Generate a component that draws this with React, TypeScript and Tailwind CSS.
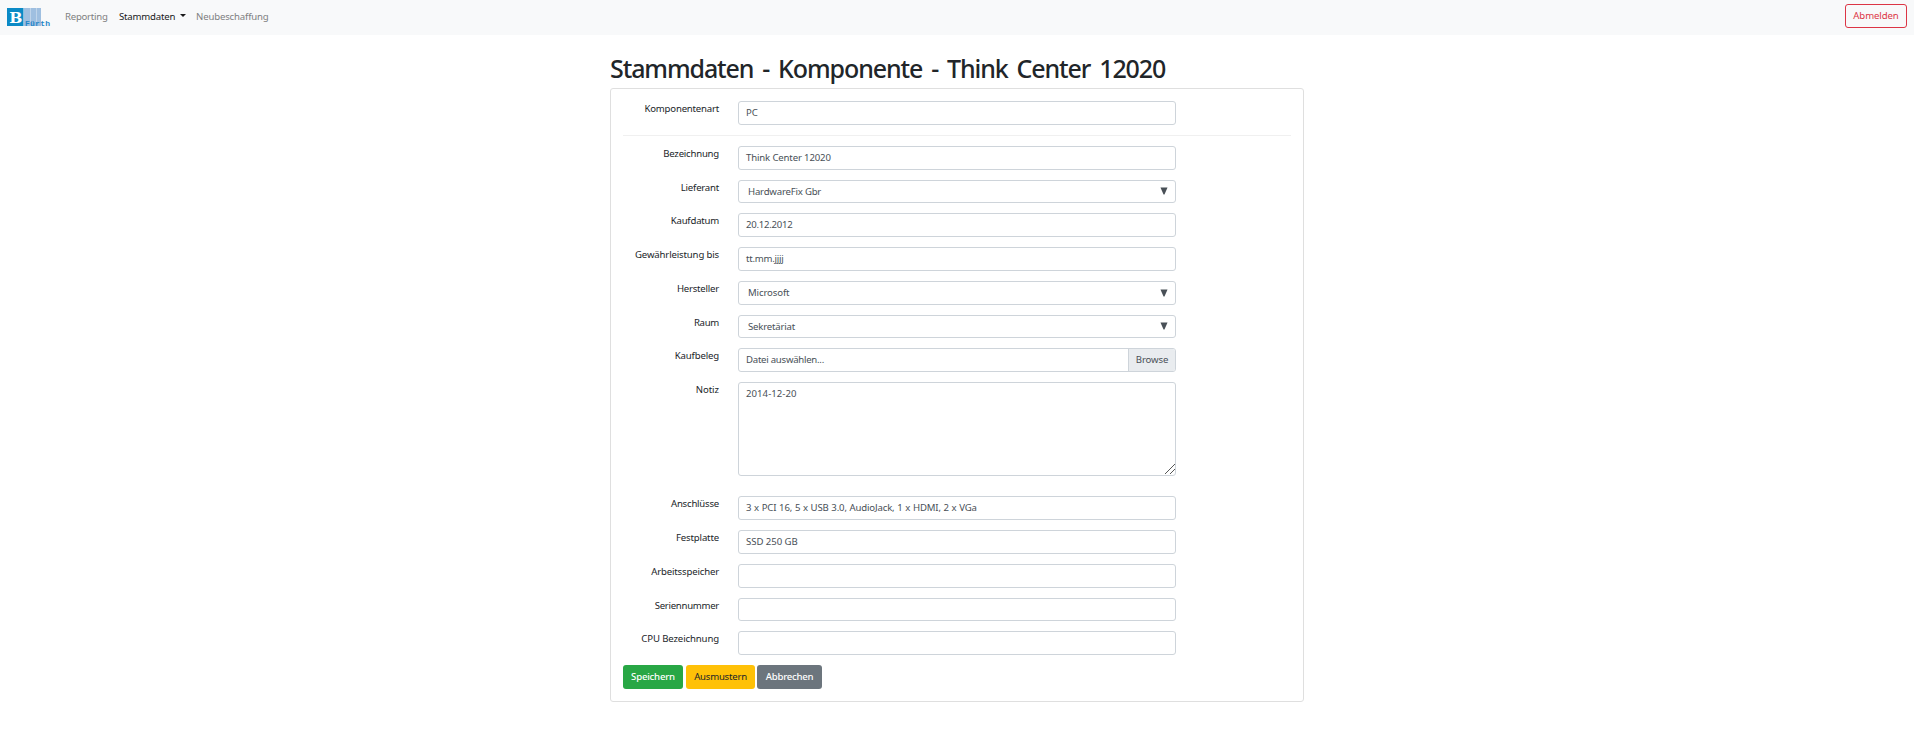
import React from "react";

const LABEL = "mt-px flex h-[14px] w-[96px] shrink-0 items-center justify-end whitespace-nowrap leading-[14px] text-[#212529]";
const FIELD = "flex w-[438px] items-center rounded-[3px] border border-[#ced4da] bg-white text-[#495057] whitespace-nowrap";

type RowProps = { label: string; track?: string; children: React.ReactNode };

function Row({ label, track = "tracking-[-0.22px]", children }: RowProps) {
  return (
    <div className="flex items-start gap-[19px]">
      <div className={LABEL}>
        <span className={track}>{label}</span>
      </div>
      {children}
    </div>
  );
}

type FieldProps = { value?: string; short?: boolean; track?: string };

function Input({ value = "", short = false, track = "tracking-[-0.15px]" }: FieldProps) {
  return (
    <div className={`${FIELD} ${short ? "h-[23px]" : "h-[24px]"} px-[7px] pt-px`}>
      <span className={track}>{value}</span>
    </div>
  );
}

function Select({ value = "", short = false, track = "tracking-[-0.2px]" }: FieldProps) {
  return (
    <div className={`${FIELD} ${short ? "h-[23px]" : "h-[24px]"} justify-between pr-[7px] pl-[9px]`}>
      <span className={`pt-px ${track}`}>{value}</span>
      <svg width="8" height="8" viewBox="0 0 8 8" className="-mt-px fill-[#495057]">
        <path d="M0.5 0.5H7.5L4.5 7.5H3.5Z" />
      </svg>
    </div>
  );
}

function Logo() {
  return (
    <svg width="44" height="20" viewBox="0 0 44 20">
      <rect x="17" width="17" height="18" fill="#9fbfe0" />
      <path d="M23.5 0V18M29.5 0V18" stroke="#bfd4ea" strokeWidth="1" />
      <rect width="16.5" height="18" fill="#0b8ac6" />
      <text x="2.2" y="14.5" fontFamily="DejaVu Serif, serif" fontWeight="700" fontSize="15.5" fill="#fff">B</text>
      <text x="18" y="17.5" textLength="25" fontFamily="Liberation Mono, monospace" fontWeight="700" fontSize="8" fill="#1f86c8">Fürth</text>
    </svg>
  );
}

export default function App() {
  return (
    <div className="min-h-[742px] bg-white font-['Noto_Sans',sans-serif] text-[9.6px] text-[#212529]">
      <nav className="flex h-[35px] items-start justify-between bg-[#f8f9fa] px-[7px]">
        <div className="flex items-start">
          <div className="mt-[8px] h-[20px]">
            <Logo />
          </div>
          <div className="flex items-center pt-[8px] pl-[14px] leading-[17px] whitespace-nowrap">
            <span className="w-[54px] tracking-[-0.25px] text-[#7f8081]">Reporting</span>
            <span className="w-[61px] tracking-[-0.2px] text-[#19191a]">Stammdaten</span>
            <svg width="6" height="3" viewBox="0 0 6 3" className="mr-[10px] -mt-[2px]">
              <path d="M0 0H6L3 3Z" fill="#19191a" />
            </svg>
            <span className="tracking-[-0.16px] text-[#7f8081]">Neubeschaffung</span>
          </div>
        </div>
        <button className="mt-[4px] flex h-[24px] w-[62px] items-center justify-center rounded-[3px] border border-[#dc3545] pt-px tracking-[-0.1px] text-[#dc3545]">
          Abmelden
        </button>
      </nav>
      <main className="mx-auto w-[694px] pt-[16px]">
        <h1 className="h-[37px] text-[25px] leading-[34px] font-medium tracking-[-1.1px] [word-spacing:3.5px] whitespace-nowrap">
          Stammdaten - Komponente - Think Center 12020
        </h1>
        <section className="h-[614px] rounded-[3px] border border-[#dfdfdf] px-[12px] pt-[12px]">
          <Row label="Komponentenart" track="tracking-[-0.2px]"><Input value="PC" /></Row>
          <hr className="mt-[10px] mb-[10px] border-t border-[#f0f0f0]" />
          <div className="flex flex-col gap-[10px]">
            <Row label="Bezeichnung"><Input value="Think Center 12020" /></Row>
            <Row label="Lieferant" track="tracking-[-0.22px]"><Select value="HardwareFix Gbr" short /></Row>
            <Row label="Kaufdatum" track="tracking-[-0.22px]"><Input value="20.12.2012" track="tracking-[-0.25px]" /></Row>
            <Row label="Gewährleistung bis" track="tracking-[-0.15px]"><Input value="tt.mm.jjjj" track="tracking-[-0.25px]" /></Row>
            <Row label="Hersteller"><Select value="Microsoft" track="tracking-[-0.12px]" /></Row>
            <Row label="Raum" track="tracking-[-0.3px]"><Select value="Sekretäriat" short track="tracking-[-0.2px]" /></Row>
            <Row label="Kaufbeleg" track="tracking-[-0.16px]">
              <div className={`${FIELD} h-[24px] justify-between overflow-hidden pl-[7px]`}>
                <span className="pt-px tracking-[-0.25px]">Datei auswählen...</span>
                <span className="flex h-full w-[47px] items-center justify-center border-l border-[#ced4da] bg-[#e9ecef] pt-px tracking-[-0.12px]">Browse</span>
              </div>
            </Row>
            <Row label="Notiz" track="tracking-[-0.05px]">
              <div className="flex h-[94px] w-[438px] justify-between rounded-[3px] border border-[#ced4da] pl-[7px] text-[#495057]">
                <span className="pt-[2px] leading-[17px] tracking-[0.05px]">2014-12-20</span>
                <svg width="11" height="11" viewBox="0 0 11 11" className="mb-px self-end" stroke="#444" strokeWidth="0.9" fill="none">
                  <path d="M1 11L11 1M6 11L11 6" />
                </svg>
              </div>
            </Row>
          </div>
          <div className="mt-[20px] flex flex-col gap-[10px]">
            <Row label="Anschlüsse"><Input value="3 x PCI 16, 5 x USB 3.0, AudioJack, 1 x HDMI, 2 x VGa" track="tracking-[-0.16px] [word-spacing:0.4px]" /></Row>
            <Row label="Festplatte" track="tracking-[-0.15px]"><Input value="SSD 250 GB" track="tracking-[-0.05px]" /></Row>
            <Row label="Arbeitsspeicher" track="tracking-[-0.16px]"><Input /></Row>
            <Row label="Seriennummer" track="tracking-[-0.28px]"><Input short /></Row>
            <Row label="CPU Bezeichnung" track="tracking-[-0.12px]"><Input /></Row>
          </div>
          <div className="mt-[10px] flex">
            <button className="mr-[3px] h-[24px] w-[60px] rounded-[3px] bg-[#28a745] pt-px font-medium tracking-[-0.2px] text-white">Speichern</button>
            <button className="mr-[2px] h-[24px] w-[69px] rounded-[3px] bg-[#ffc107] pt-px tracking-[-0.22px] text-[#212529]">Ausmustern</button>
            <button className="h-[24px] w-[65px] rounded-[3px] bg-[#6c757d] pt-px font-medium tracking-[-0.25px] text-white">Abbrechen</button>
          </div>
        </section>
      </main>
    </div>
  );
}
